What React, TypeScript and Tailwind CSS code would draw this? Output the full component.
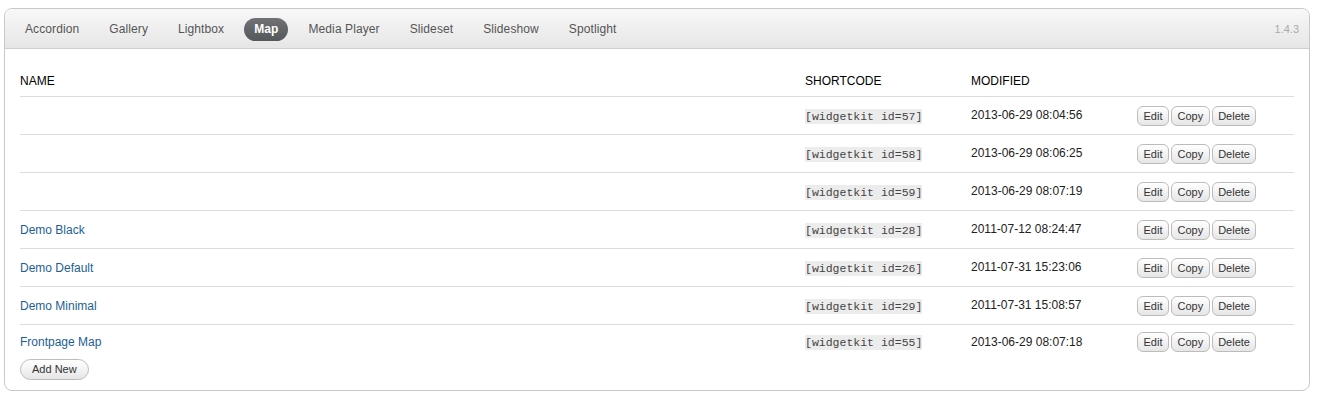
import React from 'react'

type Row = {
  name: string
  id: number
  modified: string
}

const tabs = ['Accordion', 'Gallery', 'Lightbox', 'Map', 'Media Player', 'Slideset', 'Slideshow', 'Spotlight']

const rows: Row[] = [
  { name: '', id: 57, modified: '2013-06-29 08:04:56' },
  { name: '', id: 58, modified: '2013-06-29 08:06:25' },
  { name: '', id: 59, modified: '2013-06-29 08:07:19' },
  { name: 'Demo Black', id: 28, modified: '2011-07-12 08:24:47' },
  { name: 'Demo Default', id: 26, modified: '2011-07-31 15:23:06' },
  { name: 'Demo Minimal', id: 29, modified: '2011-07-31 15:08:57' },
  { name: 'Frontpage Map', id: 55, modified: '2013-06-29 08:07:18' }
]

const btn =
  'h-[20px] px-[5.5px] rounded-[6px] border border-[#bcbcbc] bg-gradient-to-b from-white to-[#e6e6e6] text-[11px] leading-[18px] text-[#333] shadow-[inset_0_1px_0_#fff]'

const App: React.FC = () => {
  return (
    <div className="pt-[8px] pl-[4px] pr-[9px] font-['Liberation_Sans',Arial,sans-serif] text-[12px]">
      <div className="w-[1306px] h-[383px] border border-[#c8c8c8] rounded-[8px] bg-white overflow-hidden">
        {/* Tabs */}
        <div className="h-[40px] flex items-center justify-between pl-[10px] pr-[10px] pt-[2px] bg-gradient-to-b from-[#f8f8f8] to-[#e6e6e6] border-b border-[#cfcfcf]">
          <div className="flex items-center gap-[10px] tracking-[0.1px]">
            {tabs.map(t =>
              t === 'Map' ? (
                <span
                  key={t}
                  className="h-[23px] px-[10px] rounded-full bg-gradient-to-b from-[#707275] to-[#55585b] text-white font-bold leading-[23px]"
                >
                  {t}
                </span>
              ) : (
                <span key={t} className="px-[10px] text-[#555] leading-[23px]">
                  {t}
                </span>
              )
            )}
          </div>
          <span className="text-[11px] text-[#aaa]">1.4.3</span>
        </div>

        {/* Table */}
        <div className="px-[15px] pt-[16px]">
          <div className="grid grid-cols-[785px_166px_166px_1fr] h-[32px] items-center border-b border-[#dcdcdc] text-black">
            <div>NAME</div>
            <div>SHORTCODE</div>
            <div>MODIFIED</div>
            <div />
          </div>
          {rows.map((r, i) => (
            <div
              key={r.id}
              className={
                'grid grid-cols-[785px_166px_166px_1fr] items-center ' +
                (i === rows.length - 1 ? 'h-[34px]' : 'h-[38px] border-b border-[#dcdcdc]')
              }
            >
              <div className="text-[#1d5f95]">{r.name}</div>
              <div>
                <span className="bg-[#ececec] text-[#444] font-['Liberation_Mono',monospace] text-[11.5px] leading-[14px] py-[1px]">
                  [widgetkit id={r.id}]
                </span>
              </div>
              <div className="text-[#222] -mt-[1px]">{r.modified}</div>
              <div className="flex gap-[2px]">
                <button className={btn}>Edit</button>
                <button className={btn}>Copy</button>
                <button className={btn}>Delete</button>
              </div>
            </div>
          ))}
          <button className="h-[21px] px-[11px] rounded-full border border-[#bcbcbc] bg-gradient-to-b from-white to-[#e6e6e6] text-[11px] leading-[19px] text-[#333]">
            Add New
          </button>
        </div>
      </div>
    </div>
  )
}

export default App
